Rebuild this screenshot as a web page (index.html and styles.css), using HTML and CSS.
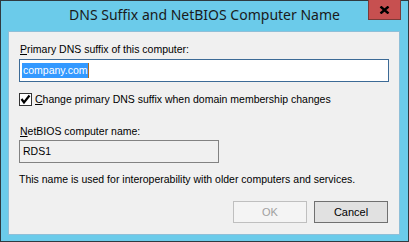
FILE: index.html
```html
<!DOCTYPE html>
<html lang="en">
<head>
    <meta charset="UTF-8">
    <title>DNS Suffix and NetBIOS Computer Name</title>
    <link rel="stylesheet" href="styles.css">
</head>
<body>
    <div class="window">
        <div class="titlebar">
            <span></span>
            <div class="title">DNS Suffix and NetBIOS Computer Name</div>
            <div class="close">
                <svg width="11" height="8" viewBox="0 0 11 8">
                    <path d="M1.5 0.5 L9.5 7.5 M9.5 0.5 L1.5 7.5" stroke="#000" stroke-width="2.4"/>
                </svg>
            </div>
        </div>

        <div class="client">
            <div class="label"><u>P</u>rimary DNS suffix of this computer:</div>
            <div class="textbox focused"><span class="selected">company.com</span></div>

            <div class="check-row">
                <span class="checkbox">
                    <svg width="11" height="11" viewBox="0 0 11 11">
                        <path d="M1.5 5 L4 8.5 L9.5 1.5" stroke="#000" stroke-width="2.2" fill="none"/>
                    </svg>
                </span>
                <span><u>C</u>hange primary DNS suffix when domain membership changes</span>
            </div>

            <div class="label netbios"><u>N</u>etBIOS computer name:</div>
            <div class="textbox readonly">RDS1</div>

            <div class="note">This name is used for interoperability with older computers and services.</div>

            <div class="buttons">
                <div class="button disabled">OK</div>
                <div class="button">Cancel</div>
            </div>
        </div>
    </div>
</body>
</html>
```

FILE: styles.css
```css
body {
    margin: 0;
    font-family: "Liberation Sans", Arial, sans-serif;
    font-size: 10.5px;
    color: #000;
}
.window {
    width: 409px;
    height: 242px;
    box-sizing: border-box;
    border: 1px solid #2f3a40;
    background: #6bcbea;
    display: flex;
    flex-direction: column;
}
.titlebar {
    height: 30px;
    display: grid;
    grid-template-columns: 1fr auto 1fr;
    align-items: start;
}
.title {
    font-family: "Noto Sans", sans-serif;
    font-size: 14px;
    line-height: 30px;
    color: #1a1a1a;
    margin-top: -1px;
}
.close {
    justify-self: end;
    width: 33px;
    height: 20px;
    box-sizing: border-box;
    margin-right: 7px;
    margin-top: -1px;
    background: #c75050;
    border: 1px solid #7a3a38;
    border-top: none;
    display: flex;
    align-items: center;
    justify-content: center;
}
.client {
    flex: 1;
    margin: 0 8px 6px 7px;
    background: #f0f0f0;
    border: 1px solid #8fbfd8;
    padding: 11px 10px 0 10px;
    display: flex;
    flex-direction: column;
}
.label {
    line-height: 13px;
    padding-left: 1px;
}
.textbox {
    height: 23px;
    box-sizing: border-box;
    margin-top: 3px;
    padding: 2px 2px;
    line-height: 17px;
    border: 1px solid #7a7a7a;
    background: #fff;
}
.textbox.focused {
    border-color: #3c6a96;
}
.selected {
    display: inline-block;
    line-height: 15px;
    padding: 0 0 0 1px;
    background: #3399ff;
    color: #fff;
    border-right: 1px solid #b06a1c;
}
.textbox.readonly {
    width: 200px;
    margin-top: 2px;
    background: #f0f0f0;
    border-color: #828282;
    padding-left: 3px;
}
.check-row {
    margin-top: 11px;
    display: flex;
    align-items: center;
    gap: 3px;
    line-height: 13px;
}
.checkbox {
    width: 13px;
    height: 13px;
    box-sizing: border-box;
    border: 1px solid #333;
    background: #fff;
    display: flex;
    align-items: center;
    justify-content: center;
}
.netbios {
    margin-top: 19px;
}
.note {
    margin-top: 10px;
    line-height: 13px;
}
.buttons {
    margin-top: 15px;
    margin-right: 1px;
    display: flex;
    justify-content: flex-end;
    gap: 7px;
}
.button {
    width: 74px;
    height: 22px;
    box-sizing: border-box;
    border: 1px solid #707070;
    background: #e1e1e1;
    line-height: 20px;
    text-align: center;
    font-size: 11px;
}
.button.disabled {
    border-color: #bfbfbf;
    background: #f4f4f4;
    color: #a0a0a0;
}
```
